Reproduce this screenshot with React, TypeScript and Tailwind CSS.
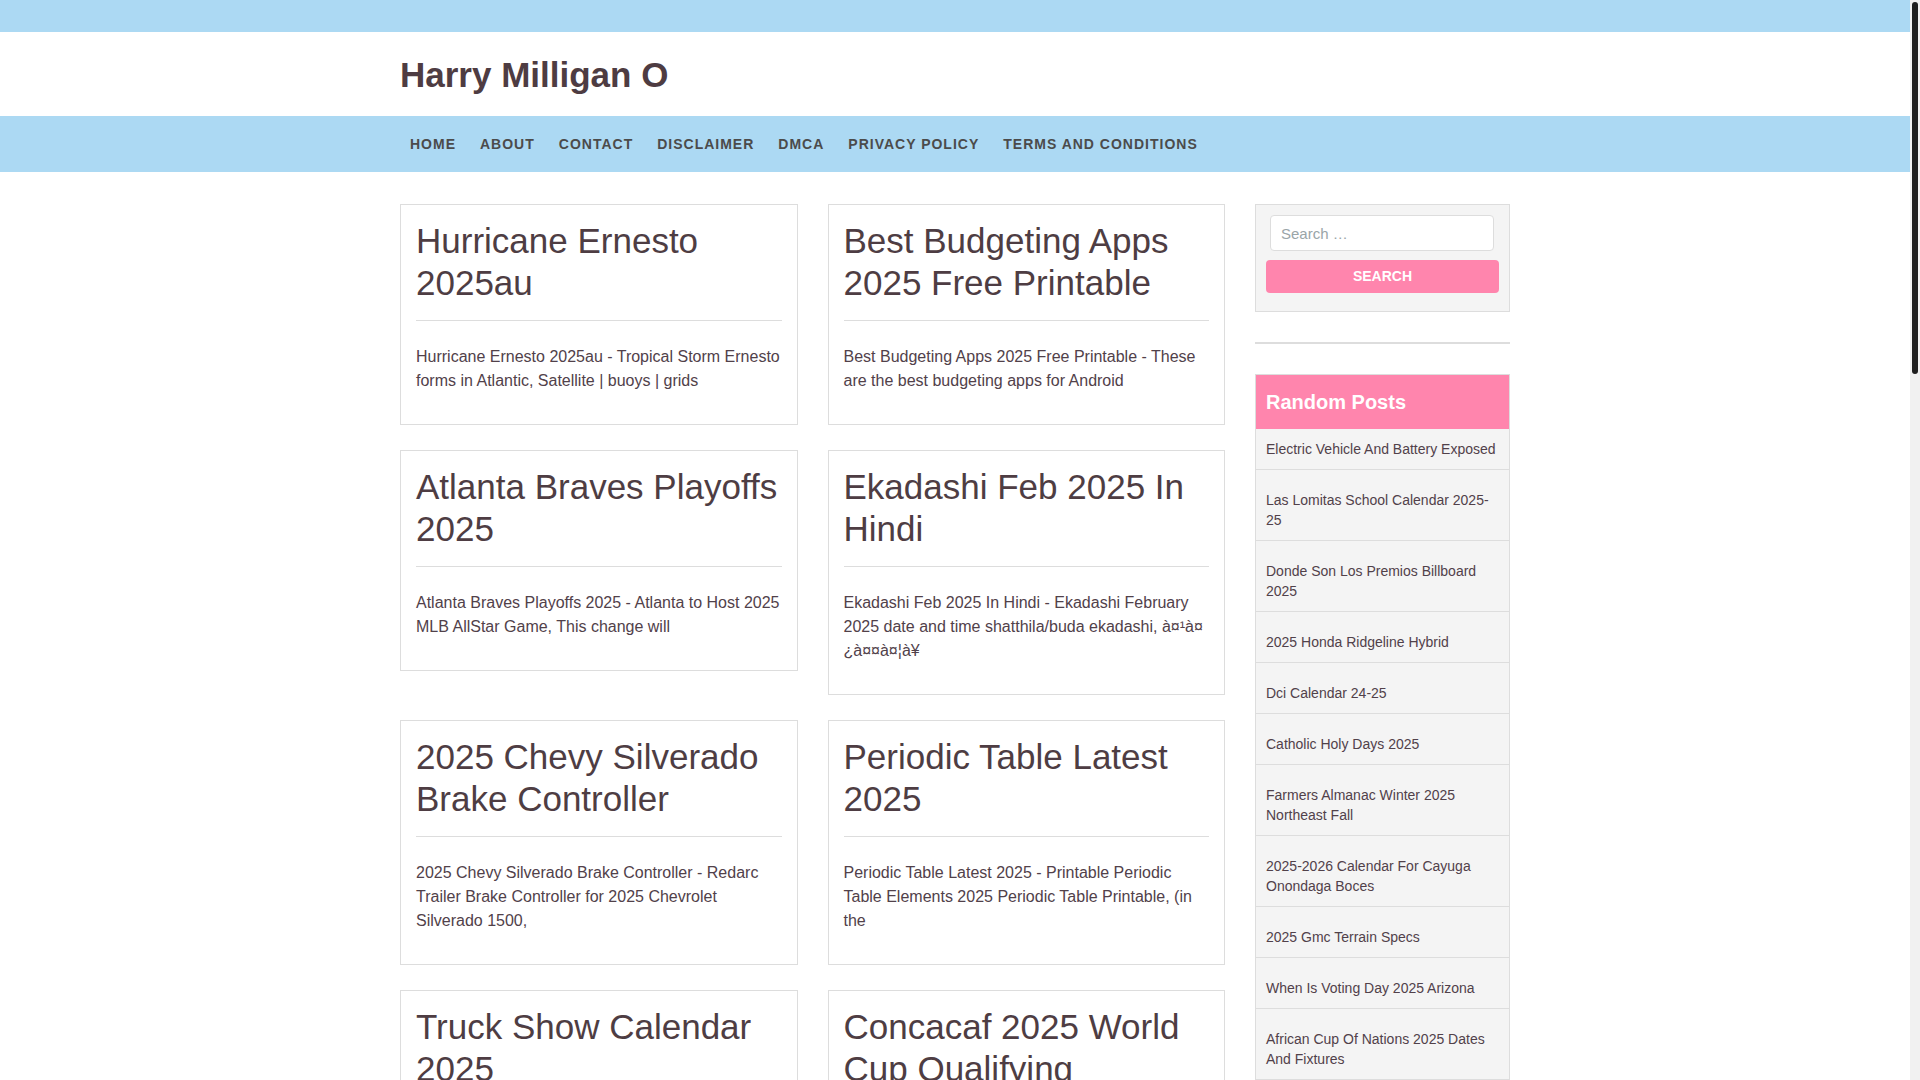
const navLinks = ['Home', 'About', 'Contact', 'Disclaimer', 'DMCA', 'Privacy Policy', 'Terms and Conditions'];

const posts = [
  {
    title: 'Hurricane Ernesto 2025au',
    excerpt: 'Hurricane Ernesto 2025au - Tropical Storm Ernesto forms in Atlantic, Satellite | buoys | grids',
  },
  {
    title: 'Best Budgeting Apps 2025 Free Printable',
    excerpt: 'Best Budgeting Apps 2025 Free Printable - These are the best budgeting apps for Android',
  },
  {
    title: 'Atlanta Braves Playoffs 2025',
    excerpt: 'Atlanta Braves Playoffs 2025 - Atlanta to Host 2025 MLB AllStar Game, This change will',
  },
  {
    title: 'Ekadashi Feb 2025 In Hindi',
    excerpt: (
      <>
        Ekadashi Feb 2025 In Hindi - Ekadashi February 2025 date and time shatthila/buda ekadashi, à¤¹à¤<wbr />¿à¤¤à¤¦à¥
      </>
    ),
  },
  {
    title: '2025 Chevy Silverado Brake Controller',
    excerpt: '2025 Chevy Silverado Brake Controller - Redarc Trailer Brake Controller for 2025 Chevrolet Silverado 1500,',
  },
  {
    title: 'Periodic Table Latest 2025',
    excerpt: 'Periodic Table Latest 2025 - Printable Periodic Table Elements 2025 Periodic Table Printable, (in the',
  },
  {
    title: 'Truck Show Calendar 2025',
    excerpt: 'Truck Show Calendar 2025 - Truck shows and events calendar for 2025',
  },
  {
    title: 'Concacaf 2025 World Cup Qualifying',
    excerpt: 'Concacaf 2025 World Cup Qualifying - Schedule, groups and results',
  },
];

const randomPosts = [
  'Electric Vehicle And Battery Exposed',
  'Las Lomitas School Calendar 2025-25',
  'Donde Son Los Premios Billboard 2025',
  '2025 Honda Ridgeline Hybrid',
  'Dci Calendar 24-25',
  'Catholic Holy Days 2025',
  'Farmers Almanac Winter 2025 Northeast Fall',
  '2025-2026 Calendar For Cayuga Onondaga Boces',
  '2025 Gmc Terrain Specs',
  'When Is Voting Day 2025 Arizona',
  'African Cup Of Nations 2025 Dates And Fixtures',
];

function PostCard({ title, excerpt }: { title: string; excerpt: React.ReactNode }) {
  return (
    <article className="border border-[#dddddd] bg-white p-[15px]">
      <h2 className="border-b border-[#dddddd] pb-[16px] text-[35px] leading-[42px] font-normal text-[#4e3d43]">
        <a href="#">{title}</a>
      </h2>
      <p className="mt-[24px] mb-[16px] text-[16px] leading-[24px] text-[#51414a]">{excerpt}</p>
    </article>
  );
}

function Sidebar() {
  return (
    <aside className="w-[255px] shrink-0">
      <div className="border border-[#dddddd] bg-[#f4f4f4] px-[10px] pt-[10px] pb-[18px]">
        <input
          type="search"
          placeholder="Search …"
          className="mx-[4px] block h-[36px] w-[224px] rounded-[4px] border border-[#dddddd] bg-white px-[10px] text-[15px] text-[#51414a] outline-none placeholder:text-[#9aa5a8]"
        />
        <button className="mt-[9px] block h-[33px] w-full rounded-[4px] bg-[#ff85ad] text-[14px] font-bold uppercase text-white">
          Search
        </button>
      </div>

      <div className="mt-[30px] h-[2px] bg-[#dddddd]" />

      <div className="mt-[30px] border border-[#dddddd] bg-[#f4f4f4]">
        <h3 className="bg-[#ff85ad] px-[10px] py-[15px] text-[20px] leading-[24px] font-bold text-white">Random Posts</h3>
        <ul>
          {randomPosts.map((item) => (
            <li
              key={item}
              className="border-b border-[#dddddd] px-[10px] pt-[20px] pb-[10px] text-[14px] leading-[20px] text-[#51414a] first:pt-[10px]"
            >
              <a href="#">
                {item === 'Las Lomitas School Calendar 2025-25' ? (
                  <>
                    Las Lomitas School Calendar 2025-<wbr />25
                  </>
                ) : (
                  item
                )}
              </a>
            </li>
          ))}
        </ul>
      </div>
    </aside>
  );
}

export default function App() {
  return (
    <div className="min-h-screen bg-white pr-[10px] font-['Liberation_Sans',Arial,sans-serif] text-[#4e3d43]">
      <div className="h-[32px] bg-[#acd9f3]" />

      <header className="bg-white">
        <div className="mx-auto w-[1140px] px-[15px] pt-[23px] pb-[21px]">
          <h1 className="text-[35px] leading-[40px] font-bold text-[#4e3c42]">
            <a href="#">Harry Milligan O</a>
          </h1>
        </div>
      </header>

      <nav className="bg-[#acd9f3]">
        <ul className="mx-auto flex h-[56px] w-[1140px] items-center gap-[24px] px-[25px]">
          {navLinks.map((link) => (
            <li key={link}>
              <a href="#" className="text-[14px] font-bold tracking-[1px] uppercase text-[#4b4b4b]">
                {link}
              </a>
            </li>
          ))}
        </ul>
      </nav>

      <main className="mx-auto flex w-[1140px] gap-[30px] px-[15px] pt-[32px] pb-[40px]">
        <div className="grid w-[825px] shrink-0 grid-cols-2 items-start gap-x-[30px] gap-y-[25px]">
          {posts.map((post) => (
            <PostCard key={post.title} title={post.title} excerpt={post.excerpt} />
          ))}
        </div>
        <Sidebar />
      </main>

      {/* page scrollbar as it shows in the capture */}
      <div className="fixed top-0 right-0 h-screen w-[10px] bg-[#f1f1f1]">
        <div className="mx-auto mt-[2px] h-[372px] w-[6px] rounded-full bg-[#1f1f1f]" />
      </div>
    </div>
  );
}
